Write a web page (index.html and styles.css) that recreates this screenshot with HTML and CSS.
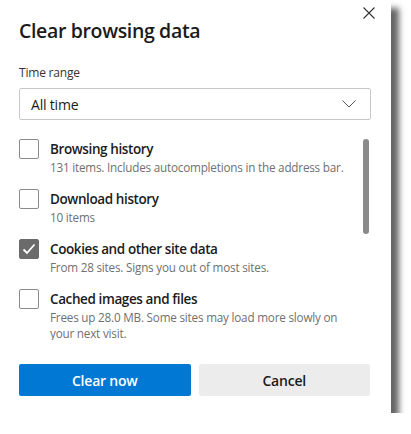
FILE: index.html
```html
<!DOCTYPE html>
<html lang="en">
    <head>
        <meta charset="utf-8" />
        <title>Clear browsing data</title>
        <link rel="stylesheet" href="styles.css">
    </head>
    <body>
        <div class="dialog">
            <button class="close" aria-label="Close">
                <svg width="12" height="12" viewBox="0 0 12 12"><path d="M0.5 0.5 L11.5 11.5 M11.5 0.5 L0.5 11.5" stroke="#333" stroke-width="1.1" fill="none"/></svg>
            </button>
            <h1>Clear browsing data</h1>

            <label class="range-label">Time range</label>
            <div class="select">
                <span>All time</span>
                <svg width="14" height="8" viewBox="0 0 14 8"><path d="M0.5 0.5 L7 7 L13.5 0.5" stroke="#555" stroke-width="1" fill="none"/></svg>
            </div>

            <div class="list">
                <div class="items">
                    <div class="item">
                        <span class="box"></span>
                        <div>
                            <p class="name">Browsing history</p>
                            <p class="info">131 items. Includes autocompletions in the address bar.</p>
                        </div>
                    </div>
                    <div class="item">
                        <span class="box"></span>
                        <div>
                            <p class="name">Download history</p>
                            <p class="info">10 items</p>
                        </div>
                    </div>
                    <div class="item">
                        <span class="box checked">
                            <svg width="14" height="12" viewBox="0 0 14 12"><path d="M1.5 6.5 L5 10 L12.5 1.5" stroke="#fff" stroke-width="1.8" fill="none"/></svg>
                        </span>
                        <div>
                            <p class="name">Cookies and other site data</p>
                            <p class="info">From 28 sites. Signs you out of most sites.</p>
                        </div>
                    </div>
                    <div class="item">
                        <span class="box"></span>
                        <div>
                            <p class="name">Cached images and files</p>
                            <p class="info">Frees up 28.0 MB. Some sites may load more slowly on your next visit.</p>
                        </div>
                    </div>
                </div>
                <div class="scrollbar"></div>
            </div>

            <div class="buttons">
                <button class="primary">Clear now</button>
                <button class="secondary">Cancel</button>
            </div>
        </div>
    </body>
</html>
```

FILE: styles.css
```css
* { margin: 0; padding: 0; box-sizing: border-box; }
body { background: #fff; font-family: "Segoe UI", "Open Sans", sans-serif; color: #1b1b1b; }

.dialog {
    position: relative;
    width: 391px;
    height: 413px;
    background: #fff;
    padding: 17px 20px 0 19px;
    box-shadow: 8px 8px 6px rgba(0, 0, 0, 0.6);
}

.close {
    position: absolute;
    top: 7px;
    right: 16px;
    border: none;
    background: none;
    width: 12px;
    height: 12px;
}
.close svg { display: block; }

h1 { font-size: 19.5px; font-weight: 600; line-height: 28px; letter-spacing: -0.35px; }

.range-label { display: block; margin-top: 20px; font-size: 12px; line-height: 16px; color: #333; letter-spacing: -0.2px; }

.select {
    margin-top: 7px;
    height: 32px;
    border: 1px solid #c8c8c8;
    border-radius: 2px;
    display: flex;
    align-items: center;
    justify-content: space-between;
    padding: 0 14px 0 11px;
    font-size: 14px;
    letter-spacing: -0.2px;
}

.list {
    margin-top: 10px;
    height: 210px;
    overflow: hidden;
    display: flex;
    gap: 8px;
}
.items { flex: 1; padding-top: 9px; }
.item { display: flex; gap: 11px; min-height: 50px; }
.box {
    flex: none;
    width: 20px;
    height: 20px;
    border: 1px solid #8a8a8a;
    border-radius: 2px;
    display: flex;
    align-items: center;
    justify-content: center;
}
.box.checked { background: #6b6b6b; border-color: #6b6b6b; }
.name { font-size: 13.5px; font-weight: 600; line-height: 20px; letter-spacing: -0.4px; }
.info { font-size: 11.7px; line-height: 16px; color: #707070; padding-right: 4px; letter-spacing: -0.2px; }

.scrollbar {
    flex: none;
    width: 6px;
    height: 95px;
    margin-top: 9px;
    margin-right: 2px;
    background: #8a8a8a;
    border-radius: 3px;
}

.buttons {
    margin-top: 24px;
    display: grid;
    grid-template-columns: 1fr 1fr;
    gap: 8px;
    padding-right: 1px;
}
.buttons button {
    height: 32px;
    border: none;
    border-radius: 2px;
    font-family: inherit;
    font-size: 14px;
    font-weight: 600;
    letter-spacing: -0.2px;
}
.primary { background: #0078d4; color: #fff; }
.secondary { background: #ececec; color: #1b1b1b; }
```
